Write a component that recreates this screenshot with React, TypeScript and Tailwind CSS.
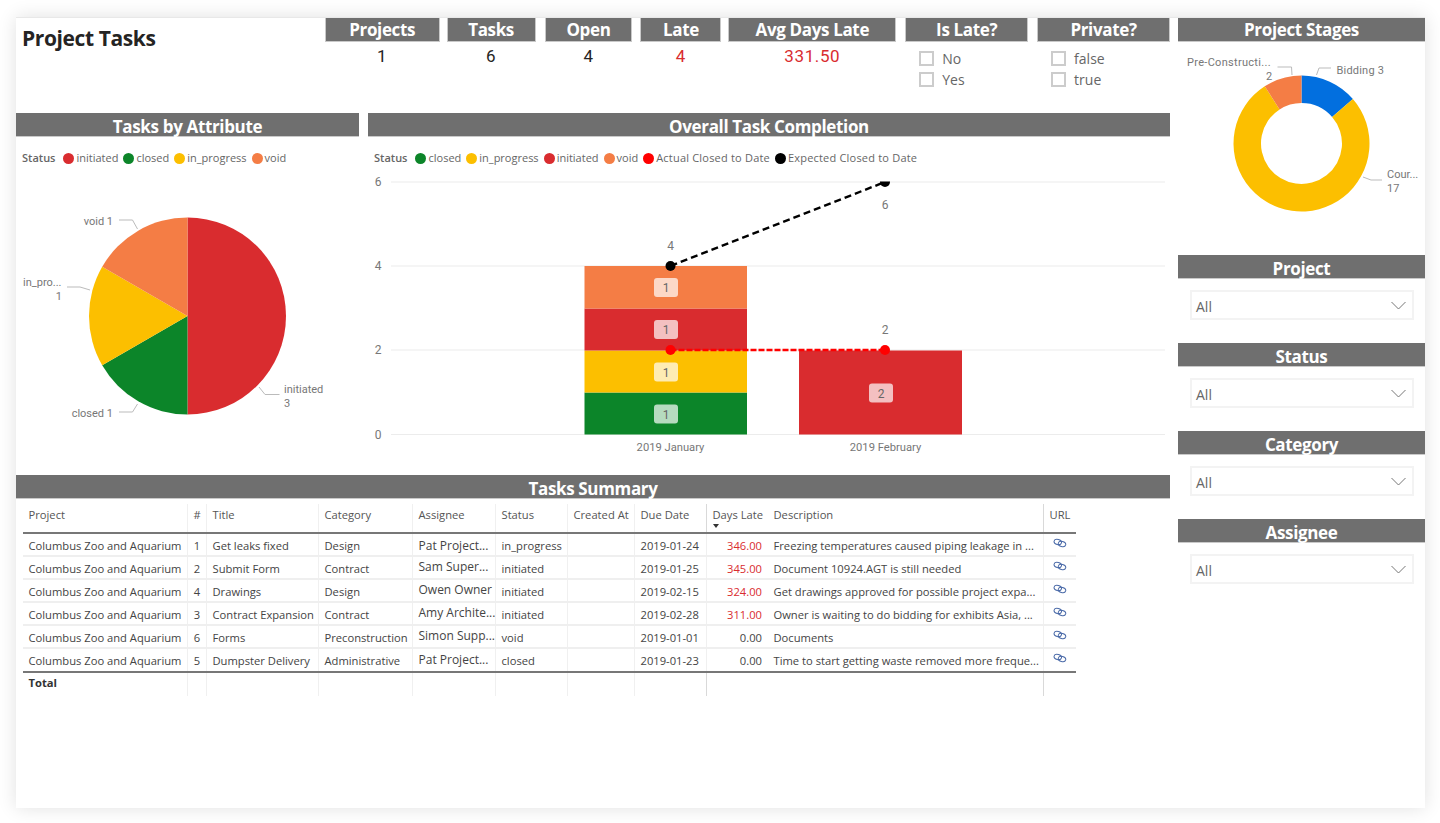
import React from "react";

const RED = "#d92c2f";
const GREEN = "#0c8529";
const YELLOW = "#fcbf00";
const ORANGE = "#f47d45";
const BLUE = "#026fdf";
const CHART_FONT = "Roboto, sans-serif";

const kpis = [
  { label: "Projects", value: "1", width: "w-[115px]", margin: "", red: false },
  { label: "Tasks", value: "6", width: "w-[89px]", margin: "ml-[7px]", red: false },
  { label: "Open", value: "4", width: "w-[88px]", margin: "ml-[9px]", red: false },
  { label: "Late", value: "4", width: "w-[81px]", margin: "ml-[8px]", red: true },
  { label: "Avg Days Late", value: "331.50", width: "w-[168px]", margin: "ml-[7px]", red: true },
];

const rows = [
  { n: "1", title: "Get leaks fixed", cat: "Design", who: "Pat Project...", status: "in_progress", due: "2019-01-24", late: "346.00", desc: "Freezing temperatures caused piping leakage in ..." },
  { n: "2", title: "Submit Form", cat: "Contract", who: "Sam Super...", status: "initiated", due: "2019-01-25", late: "345.00", desc: "Document 10924.AGT is still needed" },
  { n: "4", title: "Drawings", cat: "Design", who: "Owen Owner", status: "initiated", due: "2019-02-15", late: "324.00", desc: "Get drawings approved for possible project expa..." },
  { n: "3", title: "Contract Expansion", cat: "Contract", who: "Amy Archite...", status: "initiated", due: "2019-02-28", late: "311.00", desc: "Owner is waiting to do bidding for exhibits Asia, ..." },
  { n: "6", title: "Forms", cat: "Preconstruction", who: "Simon Supp...", status: "void", due: "2019-01-01", late: "0.00", desc: "Documents" },
  { n: "5", title: "Dumpster Delivery", cat: "Administrative", who: "Pat Project...", status: "closed", due: "2019-01-23", late: "0.00", desc: "Time to start getting waste removed more freque..." },
];

const TABLE_COLS = "grid grid-cols-[165px_19px_112px_94px_83px_72px_67px_72px_61px_276px_32px]";

// angles start at 12 o'clock and run clockwise
function point(cx: number, cy: number, r: number, deg: number) {
  const a = ((deg - 90) * Math.PI) / 180;
  return `${cx + r * Math.cos(a)} ${cy + r * Math.sin(a)}`;
}

function slice(cx: number, cy: number, r: number, from: number, to: number) {
  const large = to - from > 180 ? 1 : 0;
  return `M ${cx} ${cy} L ${point(cx, cy, r, from)} A ${r} ${r} 0 ${large} 1 ${point(cx, cy, r, to)} Z`;
}

function ring(cx: number, cy: number, r: number, inner: number, from: number, to: number) {
  const large = to - from > 180 ? 1 : 0;
  return `M ${point(cx, cy, r, from)} A ${r} ${r} 0 ${large} 1 ${point(cx, cy, r, to)} L ${point(cx, cy, inner, to)} A ${inner} ${inner} 0 ${large} 0 ${point(cx, cy, inner, from)} Z`;
}

function Bar({ children, top = false, className = "" }: { children: React.ReactNode; top?: boolean; className?: string }) {
  return (
    <div
      className={`h-[24px] shrink-0 bg-[#6f6f6f] border-b border-[#c9c9c9] flex items-center justify-center text-white text-[17px] font-bold tracking-[-0.35px] ${top ? "pt-[1px]" : "pt-[4px]"} ${className}`}
    >
      {children}
    </div>
  );
}

function Legend({ items, className = "" }: { items: { label: string; color: string; wide?: boolean }[]; className?: string }) {
  return (
    <div className={`h-[33px] pt-[9px] flex items-center text-[11px] text-[#666666] ${className}`}>
      <span className="font-semibold mr-[8px]">Status</span>
      {items.map((it) => (
        <span key={it.label} className={`flex items-center mr-[5px] ${it.wide ? "tracking-[0.2px]" : ""}`}>
          <span className="w-[11px] h-[11px] rounded-full mr-[2px]" style={{ background: it.color }} />
          {it.label}
        </span>
      ))}
    </div>
  );
}

function Check({ label }: { label: string }) {
  return (
    <div className="h-[21px] flex items-center text-[14px] text-[#666666]">
      <span className="w-[15px] h-[15px] border-2 border-[#cccccc] mr-[8px]" />
      {label}
    </div>
  );
}

function SlicerPanel({ title, options, width, pad, margin }: { title: string; options: string[]; width: string; pad: string; margin: string }) {
  return (
    <div className={`${width} ${margin}`}>
      <Bar top className="border-x">{title}</Bar>
      <div className={`${pad} pt-[6px]`}>
        {options.map((o) => (
          <Check key={o} label={o} />
        ))}
      </div>
    </div>
  );
}

function Dropdown({ title }: { title: string }) {
  return (
    <div className="h-[88px]">
      <Bar>{title}</Bar>
      <div className="mt-[11px] ml-[12px] w-[224px] h-[30px] border-2 border-[#f3f3f3] flex items-center justify-between pl-[4px] pr-[6px] text-[14px] text-[#666666]">
        <span className="pt-[2px]">All</span>
        <svg width="15" height="9" viewBox="0 0 15 9" fill="none" stroke="#777777" strokeWidth="1">
          <path d="M0.5 1 L7.5 8 L14.5 1" />
        </svg>
      </div>
    </div>
  );
}

function LinkIcon() {
  return (
    <svg width="14" height="10" viewBox="0 0 14 10" fill="none" stroke="#4a6aa8" strokeWidth="1" className="mt-[-4px]">
      <ellipse cx="4.8" cy="4" rx="3.8" ry="2.6" transform="rotate(15 4.8 4)" />
      <ellipse cx="9" cy="6" rx="3.8" ry="2.6" transform="rotate(15 9 6)" />
    </svg>
  );
}

function PieChart() {
  const labelCls = "text-[11px] fill-[#777777]";
  const line = "#bbbbbb";
  return (
    <svg viewBox="16 170 343 305" className="w-[343px] h-[305px] block" style={{ fontFamily: CHART_FONT }}>
      <path d={slice(187.5, 316, 98.5, 0, 180)} fill={RED} />
      <path d={slice(187.5, 316, 98.5, 180, 240)} fill={GREEN} />
      <path d={slice(187.5, 316, 98.5, 240, 300)} fill={YELLOW} />
      <path d={slice(187.5, 316, 98.5, 300, 360)} fill={ORANGE} />
      <g fill="none" stroke={line}>
        <path d="M119 220 L132.5 220 L137.5 229" />
        <path d="M67 287 L80 287 L90 290" />
        <path d="M119 412 L132.5 412 L137.5 404" />
        <path d="M259 387 L265 394.5 L279.5 394.5" />
      </g>
      <text x="113" y="225" textAnchor="end" className={labelCls}>void 1</text>
      <text x="23" y="286" className={labelCls}>in_pro...</text>
      <text x="62" y="300" textAnchor="end" className={labelCls}>1</text>
      <text x="113" y="417" textAnchor="end" className={labelCls}>closed 1</text>
      <text x="284" y="393" className={labelCls}>initiated</text>
      <text x="284" y="407" className={labelCls}>3</text>
    </svg>
  );
}

function ValueTag({ x, y, value }: { x: number; y: number; value: string }) {
  return (
    <g>
      <rect x={x - 12} y={y - 9.5} width="24" height="19" rx="3" fill="#ffffff" fillOpacity="0.7" />
      <text x={x} y={y + 4.5} textAnchor="middle" className="text-[12px] fill-[#666666]">{value}</text>
    </g>
  );
}

function ComboChart() {
  const axis = "text-[12px] fill-[#777777]";
  const month = "text-[11.2px] fill-[#777777]";
  return (
    <svg viewBox="368 170 802 305" className="w-[802px] h-[305px] block" style={{ fontFamily: CHART_FONT }}>
      <defs>
        <clipPath id="plot">
          <rect x="368" y="181.5" width="802" height="270" />
        </clipPath>
      </defs>
      {[182, 266, 350, 434.5].map((y) => (
        <line key={y} x1="391" x2="1165" y1={y} y2={y} stroke="#ececec" strokeWidth="1.2" />
      ))}
      <text x="378" y="186" textAnchor="middle" className={axis}>6</text>
      <text x="378" y="270" textAnchor="middle" className={axis}>4</text>
      <text x="378" y="354" textAnchor="middle" className={axis}>2</text>
      <text x="378" y="439" textAnchor="middle" className={axis}>0</text>

      <rect x="584.5" y="392.5" width="162.5" height="42" fill={GREEN} />
      <rect x="584.5" y="350.5" width="162.5" height="42" fill={YELLOW} />
      <rect x="584.5" y="308.5" width="162.5" height="42" fill={RED} />
      <rect x="584.5" y="266" width="162.5" height="42.5" fill={ORANGE} />
      <rect x="799" y="350.5" width="163" height="84" fill={RED} />

      <ValueTag x={666} y={287.5} value="1" />
      <ValueTag x={666} y={329.5} value="1" />
      <ValueTag x={666} y={372} value="1" />
      <ValueTag x={666} y={414} value="1" />
      <ValueTag x={881} y={393} value="2" />

      <g clipPath="url(#plot)">
        <line x1="670.5" y1="266" x2="885" y2="182" stroke="#000000" strokeWidth="2.4" strokeDasharray="7 4" />
        <line x1="670.5" y1="350" x2="885" y2="350" stroke="#ff0000" strokeWidth="2.4" strokeDasharray="6 2" />
        <circle cx="670.5" cy="266" r="5" fill="#000000" />
        <circle cx="885" cy="182" r="5" fill="#000000" />
        <circle cx="670.5" cy="350" r="5" fill="#ff0000" />
        <circle cx="885" cy="350" r="5" fill="#ff0000" />
      </g>

      <text x="670.5" y="250" textAnchor="middle" className={axis}>4</text>
      <text x="885" y="209" textAnchor="middle" className={axis}>6</text>
      <text x="885" y="334" textAnchor="middle" className={axis}>2</text>
      <text x="670.5" y="451" textAnchor="middle" className={month}>2019 January</text>
      <text x="885.5" y="451" textAnchor="middle" className={month}>2019 February</text>
    </svg>
  );
}

function StagesDonut() {
  const labelCls = "text-[11px] fill-[#777777]";
  const b = (3 / 22) * 360;
  const c = b + (17 / 22) * 360;
  return (
    <svg viewBox="1178 42 247 213" className="w-[247px] h-[213px] block" style={{ fontFamily: CHART_FONT }}>
      <path d={ring(1301.5, 143.5, 68, 40.5, 0, b)} fill={BLUE} />
      <path d={ring(1301.5, 143.5, 68, 40.5, b, c)} fill={YELLOW} />
      <path d={ring(1301.5, 143.5, 68, 40.5, c, 360)} fill={ORANGE} />
      <g fill="none" stroke="#bbbbbb">
        <path d="M1277.5 67 L1291.5 67 L1292 75" />
        <path d="M1316.5 75 L1319 68 L1331 68" />
        <path d="M1363 177 L1371 180 L1382 180" />
      </g>
      <text x="1187" y="66" className={labelCls} letterSpacing="0.3">Pre-Constructi...</text>
      <text x="1269" y="80" textAnchor="middle" className={labelCls}>2</text>
      <text x="1336.5" y="74" className={labelCls} letterSpacing="0.2">Bidding 3</text>
      <text x="1387" y="178" className={labelCls}>Cour...</text>
      <text x="1387" y="192" className={labelCls}>17</text>
    </svg>
  );
}

function TaskTable() {
  const base = "px-[5.5px] pt-[3px] flex items-center whitespace-nowrap overflow-hidden";
  const cell = `${base} border-r border-[#f0f0f0]`;
  const dark = `${base} border-r border-[#d9d9d9]`;
  const headers = ["Project", "#", "Title", "Category", "Assignee", "Status", "Created At"];
  return (
    <div className="ml-[7px] mt-[5px] w-[1053px] text-[11.2px] text-[#444444]">
      {/* header */}
      <div className={`${TABLE_COLS} h-[30px] border-b-2 border-[#777777] text-[#555555]`}>
        {headers.map((h, i) => (
          <div key={h} className={`${cell} items-start`}>
            {i === 1 ? <span className="mx-auto">{h}</span> : h}
          </div>
        ))}
        <div className={`${dark} items-start`}>Due Date</div>
        <div className={`${base} relative items-start`}>
          Days Late
          <span className="absolute left-[6px] top-[20px] w-0 h-0 border-x-[3px] border-x-transparent border-t-[4px] border-t-[#333333]" />
        </div>
        <div className={`${dark} items-start`}>Description</div>
        <div className="px-[5.5px] pt-[3px]">URL</div>
      </div>

      {rows.map((r, i) => (
        <div key={r.n} className={`${TABLE_COLS} ${i < rows.length - 1 ? "h-[23px] border-b-2 border-[#efefef]" : "h-[22px]"}`}>
          <div className={cell}>Columbus Zoo and Aquarium</div>
          <div className={`${cell} justify-center px-0`}>{r.n}</div>
          <div className={cell}>{r.title}</div>
          <div className={cell}>{r.cat}</div>
          <div className={`${cell} text-[12px] ${i === 0 ? "" : "pb-[4px]"}`}>{r.who}</div>
          <div className={cell}>{r.status}</div>
          <div className={cell} />
          <div className={cell}>{r.due}</div>
          <div className={`${base} justify-end pr-[6px] ${r.late === "0.00" ? "" : "text-[#d92c2f]"}`}>{r.late}</div>
          <div className={cell}>{r.desc}</div>
          <div className="flex items-center justify-center">
            <LinkIcon />
          </div>
        </div>
      ))}

      {/* total */}
      <div className={`${TABLE_COLS} h-[25px] border-t-2 border-[#777777]`}>
        <div className={`${cell} font-bold text-[#333333]`}>
          <span className="mb-[5px]">Total</span>
        </div>
        <div className={cell} />
        <div className={cell} />
        <div className={cell} />
        <div className={cell} />
        <div className={cell} />
        <div className={cell} />
        <div className={dark} />
        <div className={base} />
        <div className={dark} />
        <div />
      </div>
    </div>
  );
}

export default function App() {
  return (
    <div className="h-[823px] overflow-hidden bg-white pt-[17px] pl-[16px]" style={{ fontFamily: '"Open Sans", sans-serif' }}>
      <div className="w-[1409px] h-[791px] bg-white border-t border-[#e8e8e8] shadow-[0_0_18px_rgba(0,0,0,0.12)] flex">
        {/* left column */}
        <div className="w-[1154px] shrink-0">
          <div className="h-[95px] flex">
            <h1 className="w-[309px] pl-[6px] pt-[5px] text-[21px] font-bold text-[#252423] tracking-[-0.4px]">Project Tasks</h1>
            {kpis.map((k) => (
              <div key={k.label} className={`${k.width} ${k.margin}`}>
                <Bar top className="border-x">{k.label}</Bar>
                <div
                  className={`text-center text-[17px] pt-[2px] tracking-[0.6px] ${k.red ? "text-[#d92c2f]" : "text-[#252423]"}`}
                  style={{ fontFamily: CHART_FONT }}
                >
                  {k.value}
                </div>
              </div>
            ))}
            <SlicerPanel title="Is Late?" options={["No", "Yes"]} width="w-[123px]" pad="pl-[14px]" margin="ml-[9px]" />
            <SlicerPanel title="Private?" options={["false", "true"]} width="w-[133px]" pad="pl-[14px]" margin="ml-[9px]" />
          </div>

          <div className="h-[362px] flex">
            <div className="w-[343px]">
              <Bar>Tasks by Attribute</Bar>
              <Legend
                className="pl-[6px]"
                items={[
                  { label: "initiated", color: RED },
                  { label: "closed", color: GREEN },
                  { label: "in_progress", color: YELLOW },
                  { label: "void", color: ORANGE },
                ]}
              />
              <PieChart />
            </div>
            <div className="w-[802px] ml-[9px]">
              <Bar>Overall Task Completion</Bar>
              <Legend
                className="pl-[6px]"
                items={[
                  { label: "closed", color: GREEN },
                  { label: "in_progress", color: YELLOW },
                  { label: "initiated", color: RED },
                  { label: "void", color: ORANGE },
                  { label: "Actual Closed to Date", color: "#ff0000", wide: true },
                  { label: "Expected Closed to Date", color: "#000000", wide: true },
                ]}
              />
              <ComboChart />
            </div>
          </div>

          <Bar>Tasks Summary</Bar>
          <TaskTable />
        </div>

        {/* right column */}
        <div className="w-[247px] ml-[8px] shrink-0">
          <Bar top>Project Stages</Bar>
          <StagesDonut />
          <Dropdown title="Project" />
          <Dropdown title="Status" />
          <Dropdown title="Category" />
          <Dropdown title="Assignee" />
        </div>
      </div>
    </div>
  );
}
